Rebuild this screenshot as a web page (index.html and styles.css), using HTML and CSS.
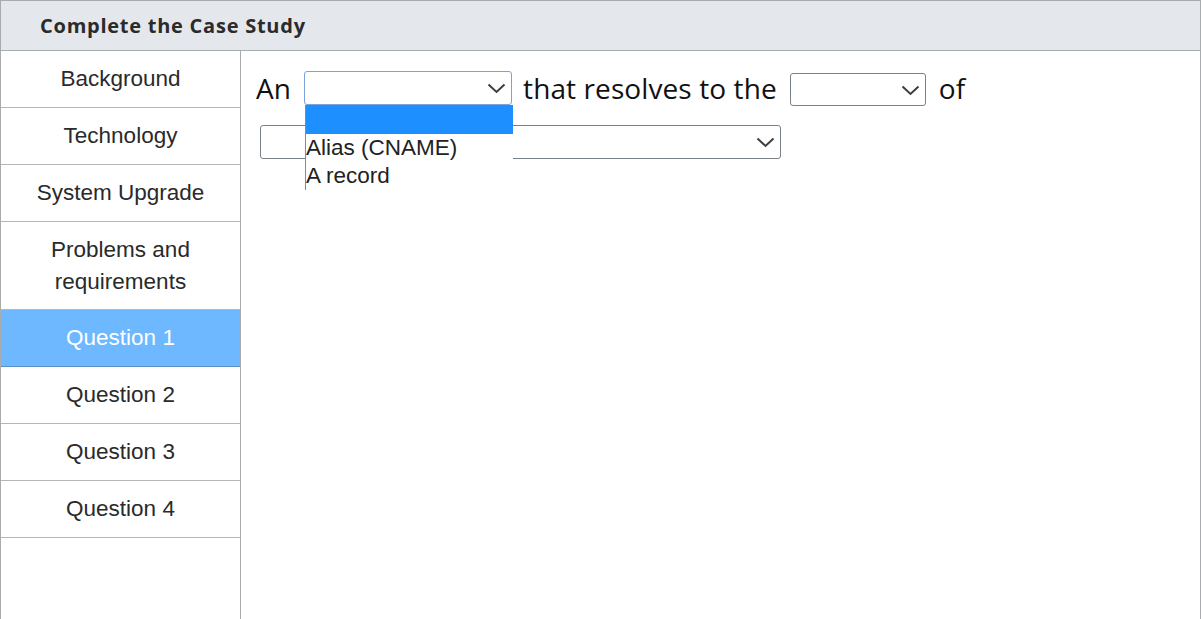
FILE: index.html
```html
<!DOCTYPE html>
<html>
<head>
<meta charset="utf-8">
<link rel="stylesheet" href="styles.css">
</head>
<body>
<div class="frame">
  <div class="header">Complete the Case Study</div>
  <div class="main">
    <nav class="sidebar">
      <div class="nav-item">Background</div>
      <div class="nav-item">Technology</div>
      <div class="nav-item">System Upgrade</div>
      <div class="nav-item two-line">Problems and<br>requirements</div>
      <div class="nav-item active">Question 1</div>
      <div class="nav-item">Question 2</div>
      <div class="nav-item">Question 3</div>
      <div class="nav-item">Question 4</div>
    </nav>
    <section class="content">
      <div class="line line-one">
        <span class="word">An</span>
        <div class="select select-a focused">
          <svg class="chev" viewBox="0 0 19 11" width="19" height="11"><path d="M1.5 1.5 L9.5 9 L17.5 1.5" fill="none" stroke="#3a3f44" stroke-width="2"/></svg>
          <div class="dropdown">
            <div class="opt selected">&nbsp;</div>
            <div class="opt">Alias (CNAME)</div>
            <div class="opt">A record</div>
          </div>
        </div>
        <span class="word">that resolves to the</span>
        <div class="select select-b">
          <svg class="chev" viewBox="0 0 19 11" width="19" height="11"><path d="M1.5 1.5 L9.5 9 L17.5 1.5" fill="none" stroke="#3a3f44" stroke-width="2"/></svg>
        </div>
        <span class="word">of</span>
      </div>
      <div class="line line-two">
        <div class="select select-c">
          <svg class="chev" viewBox="0 0 19 11" width="19" height="11"><path d="M1.5 1.5 L9.5 9 L17.5 1.5" fill="none" stroke="#3a3f44" stroke-width="2"/></svg>
        </div>
      </div>
    </section>
  </div>
</div>
</body>
</html>
```
FILE: styles.css
```css
html, body {
  margin: 0;
  padding: 0;
  background: #fff;
}
.frame {
  width: 1199px;
  height: 618px;
  border: 1px solid #a9acaf;
  border-bottom: none;
  display: flex;
  flex-direction: column;
  overflow: hidden;
}
.header {
  height: 49px;
  background: #e4e8ec;
  border-bottom: 1px solid #a9acaf;
  padding-left: 39px;
  display: flex;
  align-items: center;
  font-family: "Open Sans", Lato, sans-serif;
  font-weight: 700;
  font-size: 20px;
  letter-spacing: 0.75px;
  color: #2b2b2b;
}
.main {
  flex: 1;
  display: flex;
}
.sidebar {
  width: 239px;
  border-right: 1px solid #a9acaf;
  display: flex;
  flex-direction: column;
}
.nav-item {
  height: 56px;
  flex: none;
  border-bottom: 1px solid #b4b6b8;
  display: flex;
  align-items: center;
  justify-content: center;
  text-align: center;
  font-family: "Liberation Sans", Arial, sans-serif;
  font-size: 22.5px;
  color: #2a2a2a;
}
.nav-item.two-line {
  height: 87px;
  line-height: 32px;
}
.nav-item.active {
  background: #6db8ff;
  color: #fff;
  border-bottom-color: #5a8fc4;
}
.content {
  flex: 1;
  position: relative;
  padding: 20px 0 0 15px;
}
.line {
  display: flex;
  align-items: center;
}
.line-one {
  height: 34px;
}
.word {
  font-family: "Open Sans", sans-serif;
  font-size: 28px;
  color: #111;
  letter-spacing: 0.1px;
  line-height: 34px;
}
.select {
  position: relative;
  height: 32px;
  border: 1px solid #7a8289;
  border-radius: 3px;
  background: #fff;
  box-sizing: content-box;
}
.select .chev {
  position: absolute;
  right: 5px;
  top: 11px;
}
.select-a {
  width: 206px;
  margin: 0 11px 0 13px;
  border-color: #7ba2dc;
}
.select-b {
  width: 134px;
  height: 31px;
  margin: 2px 13px 0 13px;
}
.select-c {
  width: 519px;
  margin: 20px 0 0 4px;
}
.dropdown {
  position: absolute;
  left: 0px;
  top: 33px;
  width: 207px;
  background: #fff;
  border-left: 1px solid #8a8a8a;
  z-index: 5;
}
.opt {
  height: 28px;
  line-height: 28px;
  font-family: "Liberation Sans", Arial, sans-serif;
  font-size: 22.5px;
  color: #222;
  white-space: nowrap;
}
.opt.selected {
  background: #1e8fff;
  height: 29px;
}
```
